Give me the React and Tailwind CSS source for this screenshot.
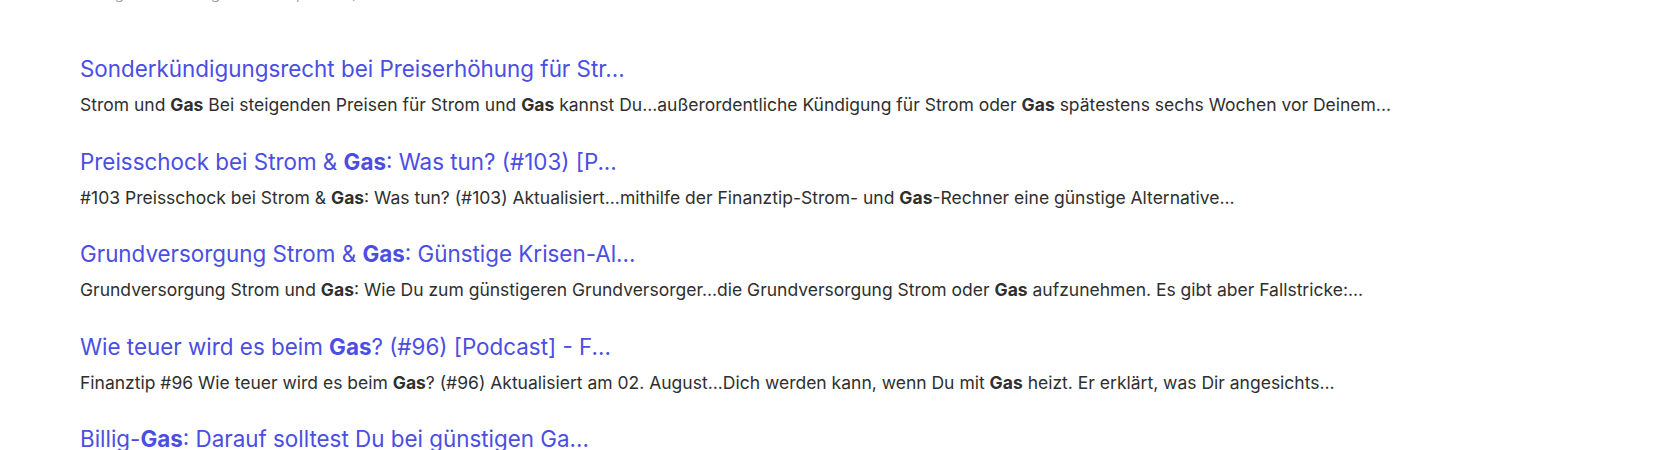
import React from "react";

const items = [
  {
    title: [["Sonderkündigungsrecht bei Preiserhöhung für Str...", false]],
    snippet: [
      ["Strom und ", false],
      ["Gas", true],
      [" Bei steigenden Preisen für Strom und ", false],
      ["Gas", true],
      [" kannst Du...außerordentliche Kündigung für Strom oder ", false],
      ["Gas", true],
      [" spätestens sechs Wochen vor Deinem...", false],
    ],
  },
  {
    title: [
      ["Preisschock bei Strom & ", false],
      ["Gas", true],
      [": Was tun? (#103) [P...", false],
    ],
    snippet: [
      ["#103 Preisschock bei Strom & ", false],
      ["Gas", true],
      [": Was tun? (#103) Aktualisiert...mithilfe der Finanztip-Strom- und ", false],
      ["Gas", true],
      ["-Rechner eine günstige Alternative...", false],
    ],
  },
  {
    title: [
      ["Grundversorgung Strom & ", false],
      ["Gas", true],
      [": Günstige Krisen-Al...", false],
    ],
    snippet: [
      ["Grundversorgung Strom und ", false],
      ["Gas", true],
      [": Wie Du zum günstigeren Grundversorger...die Grundversorgung Strom oder ", false],
      ["Gas", true],
      [" aufzunehmen. Es gibt aber Fallstricke:...", false],
    ],
  },
  {
    title: [
      ["Wie teuer wird es beim ", false],
      ["Gas", true],
      ["? (#96) [Podcast] - F...", false],
    ],
    snippet: [
      ["Finanztip #96 Wie teuer wird es beim ", false],
      ["Gas", true],
      ["? (#96) Aktualisiert am 02. August...Dich werden kann, wenn Du mit ", false],
      ["Gas", true],
      [" heizt. Er erklärt, was Dir angesichts...", false],
    ],
  },
  {
    title: [
      ["Billig-", false],
      ["Gas", true],
      [": Darauf solltest Du bei günstigen Ga...", false],
    ],
    snippet: [],
  },
];

function Parts({ parts }) {
  return parts.map(([t, b], i) =>
    b ? (
      <strong key={i} className="font-bold">
        {t}
      </strong>
    ) : (
      <span key={i}>{t}</span>
    )
  );
}

export default function App() {
  return (
    <div
      className="w-[1657px] h-[450px] overflow-hidden bg-white pl-[80px]"
      style={{ fontFamily: "Inter, 'Noto Sans', sans-serif" }}
    >
      <div className="-mt-[16px] text-[15.4px] leading-5 text-[#9ca3af] pl-[14px] whitespace-nowrap">
        Ungefähr 124 Ergebnisse (0,21 Sek.)
      </div>
      <div className="mt-[51px] flex flex-col gap-[30.5px]">
        {items.map((it, i) => (
          <div key={i} className="flex flex-col gap-[10px]">
            <a className="text-[22.4px] leading-7 text-[#4b4ee2] cursor-pointer whitespace-nowrap">
              <Parts parts={it.title} />
            </a>
            {it.snippet.length > 0 && (
              <p className="text-[17.5px] leading-6 text-[#2f2f2f] whitespace-nowrap">
                <Parts parts={it.snippet} />
              </p>
            )}
          </div>
        ))}
      </div>
    </div>
  );
}
